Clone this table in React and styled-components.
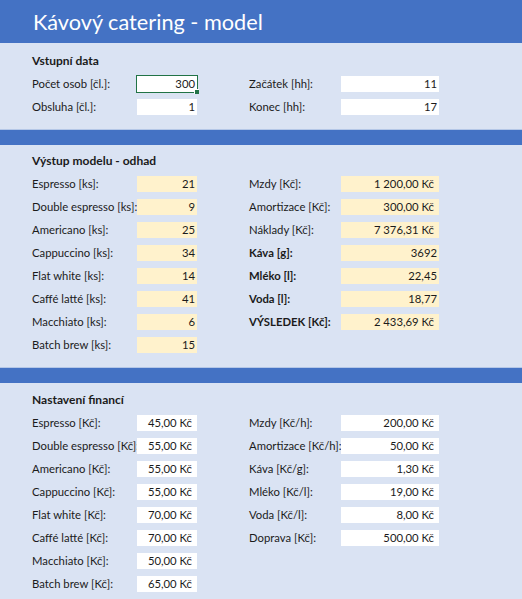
import React from "react";
import styled, { createGlobalStyle } from "styled-components";

const Global = createGlobalStyle`
  html, body { margin: 0; padding: 0; background: #dae3f3; }
  body { font-family: Lato, "Open Sans", sans-serif; color: #1b1b1b; }
`;

const Page = styled.div`
  width: 522px;
  min-height: 599px;
  background: #dae3f3;
  overflow: hidden;
`;

const Header = styled.header`
  height: 43px;
  background: #4472c4;
  display: flex;
  align-items: center;
  padding-left: 33px;
  color: #fff;
  font-size: 21.7px;
`;

const Band = styled.div`
  height: 15px;
  background: #4472c4;
  border-top: 1px solid #b4c7e7;
`;

const Section = styled.section`
  display: grid;
  grid-template-columns: 105px 60px 52px 92px 98px;
  grid-auto-rows: 23px;
  padding: ${(p) => p.$top}px 0 ${(p) => p.$bottom}px 32px;
  font-size: 11.3px;
`;

const Title = styled.div`
  grid-column: 1 / -1;
  display: flex;
  align-items: center;
  font-weight: 700;
  font-size: 12px;
`;

const Label = styled.div`
  display: flex;
  align-items: center;
  white-space: nowrap;
  font-weight: ${(p) => (p.$bold ? 700 : 400)};
  grid-column: ${(p) => (p.$right ? 4 : 1)};
`;

const Value = styled.div`
  position: relative;
  align-self: center;
  height: 16px;
  display: flex;
  align-items: center;
  justify-content: flex-end;
  padding-right: ${(p) => (p.$money ? 5 : 2)}px;
  background: ${(p) => (p.$out ? "#fff2cc" : "#ffffff")};
  grid-column: ${(p) => (p.$right ? 5 : 2)};
  white-space: nowrap;
  box-sizing: border-box;
  ${(p) => p.$selected && `outline: 1.5px solid #217346;`}
`;

const Handle = styled.span`
  position: absolute;
  right: -2px;
  bottom: -2px;
  width: 4px;
  height: 4px;
  background: #217346;
  border-left: 1px solid #fff;
  border-top: 1px solid #fff;
`;

const Spacer = styled.div`
  grid-column: 3 / -1;
`;

function Rows({ left, right, out }) {
  const n = Math.max(left.length, right.length);
  const rows = [];
  for (let i = 0; i < n; i++) {
    const l = left[i];
    const r = right[i];
    if (l) {
      rows.push(
        <Label key={"ll" + i} $bold={l.bold}>{l.label}</Label>,
        <Value key={"lv" + i} $out={out} $money={l.money} $selected={l.selected}>
          {l.value}
          {l.selected && <Handle />}
        </Value>
      );
    }
    if (r) {
      rows.push(
        <Label key={"rl" + i} $right $bold={r.bold}>{r.label}</Label>,
        <Value key={"rv" + i} $right $out={out} $money={r.money}>
          {r.value}
        </Value>
      );
    } else {
      rows.push(<Spacer key={"sp" + i} />);
    }
  }
  return rows;
}

const input = {
  left: [
    { label: "Počet osob [čl.]:", value: "300", selected: true },
    { label: "Obsluha [čl.]:", value: "1" },
  ],
  right: [
    { label: "Začátek [hh]:", value: "11" },
    { label: "Konec [hh]:", value: "17" },
  ],
};

const output = {
  left: [
    { label: "Espresso [ks]:", value: "21" },
    { label: "Double espresso [ks]:", value: "9" },
    { label: "Americano [ks]:", value: "25" },
    { label: "Cappuccino [ks]:", value: "34" },
    { label: "Flat white [ks]:", value: "14" },
    { label: "Caffé latté [ks]:", value: "41" },
    { label: "Macchiato [ks]:", value: "6" },
    { label: "Batch brew [ks]:", value: "15" },
  ],
  right: [
    { label: "Mzdy [Kč]:", value: "1 200,00 Kč", money: true },
    { label: "Amortizace [Kč]:", value: "300,00 Kč", money: true },
    { label: "Náklady [Kč]:", value: "7 376,31 Kč", money: true },
    { label: "Káva [g]:", value: "3692", bold: true },
    { label: "Mléko [l]:", value: "22,45", bold: true },
    { label: "Voda [l]:", value: "18,77", bold: true },
    { label: "VÝSLEDEK [Kč]:", value: "2 433,69 Kč", bold: true, money: true },
  ],
};

const finance = {
  left: [
    { label: "Espresso [Kč]:", value: "45,00 Kč", money: true },
    { label: "Double espresso [Kč]:", value: "55,00 Kč", money: true },
    { label: "Americano [Kč]:", value: "55,00 Kč", money: true },
    { label: "Cappuccino [Kč]:", value: "55,00 Kč", money: true },
    { label: "Flat white [Kč]:", value: "70,00 Kč", money: true },
    { label: "Caffé latté [Kč]:", value: "70,00 Kč", money: true },
    { label: "Macchiato [Kč]:", value: "50,00 Kč", money: true },
    { label: "Batch brew [Kč]:", value: "65,00 Kč", money: true },
  ],
  right: [
    { label: "Mzdy [Kč/h]:", value: "200,00 Kč", money: true },
    { label: "Amortizace [Kč/h]:", value: "50,00 Kč", money: true },
    { label: "Káva [Kč/g]:", value: "1,30 Kč", money: true },
    { label: "Mléko [Kč/l]:", value: "19,00 Kč", money: true },
    { label: "Voda [Kč/l]:", value: "8,00 Kč", money: true },
    { label: "Doprava [Kč]:", value: "500,00 Kč", money: true },
  ],
};

export default function App() {
  return (
    <Page>
      <Global />
      <Header>Kávový catering - model</Header>
      <Section $top={6} $bottom={11}>
        <Title>Vstupní data</Title>
        <Rows {...input} />
      </Section>
      <Band />
      <Section $top={4} $bottom={11}>
        <Title>Výstup modelu - odhad</Title>
        <Rows {...output} out />
      </Section>
      <Band />
      <Section $top={5} $bottom={8}>
        <Title>Nastavení financí</Title>
        <Rows {...finance} />
      </Section>
    </Page>
  );
}
